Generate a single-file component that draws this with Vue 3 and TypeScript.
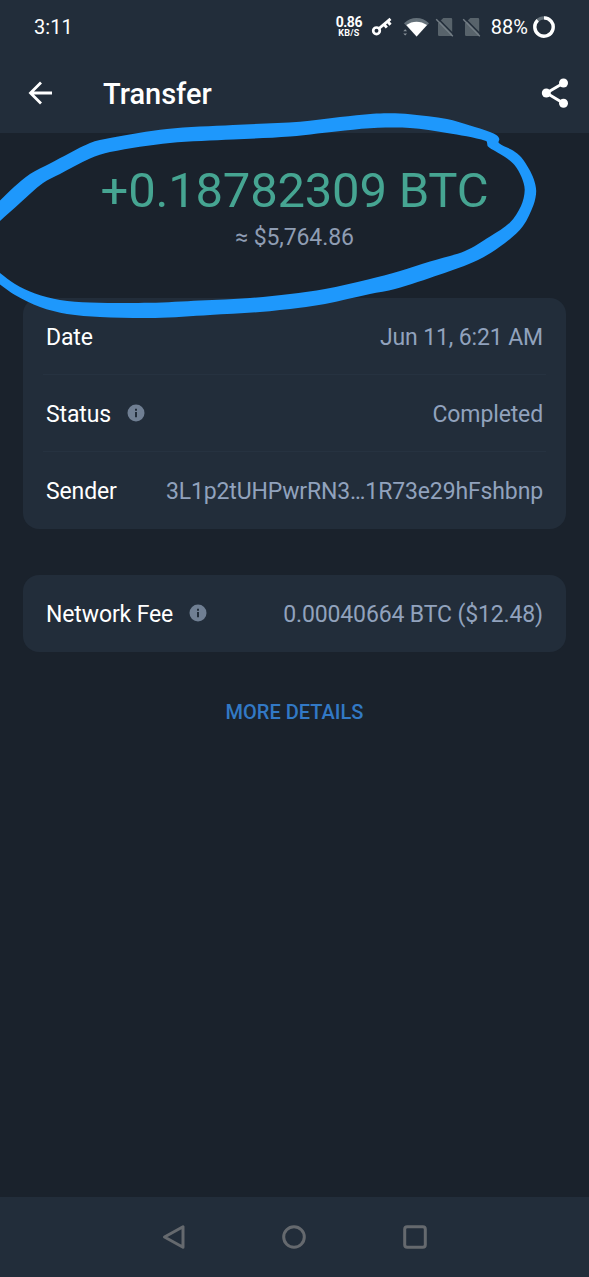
<script setup lang="ts">
interface Row {
  label: string
  value: string
  info?: boolean
}

type Point = [number, number]

const groups: Row[][] = [
  [
    { label: 'Date', value: 'Jun 11, 6:21 AM' },
    { label: 'Status', value: 'Completed', info: true },
    { label: 'Sender', value: '3L1p2tUHPwrRN3…1R73e29hFshbnp' },
  ],
  [{ label: 'Network Fee', value: '0.00040664 BTC ($12.48)', info: true }],
]

// Edges of the hand-drawn marker loop, which runs off the left side.
const outerEdge: Point[] = [
  [-6, 207], [0, 200.5], [14, 187], [30, 174], [50, 163.5], [90, 143], [110, 138], [167, 129], [233, 125],
  [300, 121.8], [340, 117], [373, 113.7], [390, 113.2], [410, 114.2], [447, 119], [470, 125.5], [490, 132],
  [497, 135.5], [499.3, 139], [498.8, 143], [513, 150.5], [521, 157], [529, 169], [533.7, 179], [536.2, 191],
  [533.5, 205], [523, 226], [505, 243], [478, 260], [440, 274.5], [395, 289], [370, 294], [325, 304],
  [300, 307.7], [260, 312], [210, 315], [155, 318], [100, 317], [67, 314], [40, 307], [15, 295], [-6, 280],
]
const innerEdge: Point[] = [
  [-6, 268], [0, 273], [15, 284], [35, 293.5], [60, 300], [90, 302.5], [150, 302.8], [200, 300.5], [250, 298],
  [290, 294], [325, 289], [368, 279.5], [400, 271], [430, 261.5], [465, 251], [490, 236.5], [510, 222.5],
  [521, 206], [524.7, 190], [521.5, 177], [514.5, 165], [505, 157], [495, 151], [488, 146.5], [486, 141],
  [447, 133], [410, 128], [378, 127.8], [345, 130.5], [290, 136.5], [233, 139.5], [170, 143], [110, 152],
  [90, 158.5], [60, 174], [43, 183], [20, 203], [0, 221], [-6, 226],
]

function smooth(points: Point[]): string {
  let d = `${points[0][0]} ${points[0][1]}`
  for (let i = 0; i < points.length - 1; i++) {
    const a = points[Math.max(0, i - 1)]
    const b = points[i]
    const c = points[i + 1]
    const e = points[Math.min(points.length - 1, i + 2)]
    // Handles follow the neighbouring direction, scaled to this segment so short ones never overshoot.
    const length = Math.hypot(c[0] - b[0], c[1] - b[1]) / 3.2
    const start = Math.hypot(c[0] - a[0], c[1] - a[1])
    const end = Math.hypot(e[0] - b[0], e[1] - b[1])
    d += ` C${b[0] + ((c[0] - a[0]) / start) * length} ${b[1] + ((c[1] - a[1]) / start) * length}`
    d += ` ${c[0] - ((e[0] - b[0]) / end) * length} ${c[1] - ((e[1] - b[1]) / end) * length} ${c[0]} ${c[1]}`
  }
  return d
}

const markerPath = `M${smooth(outerEdge)} L${smooth(innerEdge)} Z`
</script>

<template>
  <div class="screen">
    <header class="top">
      <div class="status">
        <span class="clock">3:11</span>
        <div class="indicators">
          <div class="speed"><b>0.86</b><small>KB/S</small></div>
          <svg class="key" width="22" height="20" viewBox="0 0 22 20" fill="none" stroke="#fff">
            <circle cx="5.5" cy="13.8" r="3.3" stroke-width="2.7" />
            <path d="M8 11.5 19.5 1.8M13 7.3l2.8 3.3M16.6 4.3l2.9 3.4" stroke-width="2.9" />
          </svg>
          <svg class="wifi" width="28" height="20" viewBox="0 0 28 20">
            <path d="M2 6.2C9-.9 20-.9 27 6.2L14.6 19.5Z" fill="#65717a" />
            <path d="M4.300 8.100C10.500 3.600 18.500 3.600 25 8.100L14.600 19.500Z" fill="#fff" />
            <path d="M1.300 14.200 3.200 12.200 5.100 14.200ZM1.300 16.500 3.200 18.500 5.100 16.500Z" fill="#89929a" />
          </svg>
          <svg v-for="n in 2" :key="n" class="sim" width="20" height="22" viewBox="0 0 20 22">
            <path d="M8.300 2H16a1.200 1.200 0 0 1 1.200 1.200V18.800A1.200 1.200 0 0 1 16 20H4.200a1.200 1.200 0 0 1-1.200-1.200V7.300Z" fill="#58636b" />
            <path d="M3.200 2.700 19.200 19.100" stroke="#222d3a" stroke-width="1.500" />
            <path d="M1.200 3.300 17.800 20.200" stroke="#747e86" stroke-width="1.400" />
          </svg>
          <span class="percent">88%</span>
          <svg class="battery" width="24" height="24" viewBox="0 0 24 24" fill="none" stroke-width="3.300">
            <circle cx="12" cy="12" r="9.200" stroke="#65717a" />
            <path d="M12 2.800A9.200 9.200 0 1 1 5.700 5.300" stroke="#fff" />
          </svg>
        </div>
      </div>
      <div class="bar">
        <svg class="back" width="26" height="26" viewBox="0 0 26 26" fill="none" stroke="#fff" stroke-width="2.800">
          <path d="M25 13H3.500M14 2.500 3.500 13 14 23.500" />
        </svg>
        <h1>Transfer</h1>
        <svg class="share" width="28" height="30" viewBox="0 0 28 30" fill="#fff">
          <path d="M22.500 5 5.500 15 22.500 25.200" fill="none" stroke="#fff" stroke-width="2.900" />
          <circle cx="22.500" cy="5" r="4.500" /><circle cx="5.300" cy="15" r="4.500" /><circle cx="22.500" cy="25.200" r="4.500" />
        </svg>
      </div>
    </header>

    <main>
      <section class="amount">
        <div class="crypto">+0.18782309 BTC</div>
        <div class="fiat">≈ $5,764.86</div>
      </section>
      <section v-for="(rows, g) in groups" :key="g" class="card">
        <div v-for="row in rows" :key="row.label" class="row">
          <span class="label">{{ row.label }}</span>
          <svg v-if="row.info" class="info" width="18" height="18" viewBox="0 0 18 18">
            <circle cx="9" cy="9" r="8.500" fill="#707f93" />
            <path d="M8 4.700h2v2H8ZM8 8h2v5.300H8Z" fill="#222d3a" />
          </svg>
          <span class="value">{{ row.value }}</span>
        </div>
      </section>
      <button class="more">MORE DETAILS</button>
    </main>

    <nav>
      <svg width="24" height="26" viewBox="0 0 24 26"><path d="M21 2.700V23.300L2.500 13Z" /></svg>
      <svg width="26" height="26" viewBox="0 0 26 26"><circle cx="13" cy="13" r="10.300" /></svg>
      <svg width="26" height="26" viewBox="0 0 26 26"><rect x="2.700" y="2.700" width="20.600" height="20.600" rx="2.500" /></svg>
    </nav>

    <svg class="marker" width="589" height="340" viewBox="0 0 589 340"><path :d="markerPath" /></svg>
  </div>
</template>

<style>
body {
  background: #1a222c;
}
</style>

<style scoped>
.screen {
  position: relative;
  box-sizing: border-box;
  width: 589px;
  height: 1277px;
  display: flex;
  flex-direction: column;
  overflow: hidden;
  background: #1a222c;
  color: #fff;
  font-family: Roboto, sans-serif;
}
svg {
  display: block;
  flex: none;
}
.top {
  height: 133px;
  background: #222d3a;
}
.status {
  height: 54px;
  display: flex;
  align-items: center;
  justify-content: space-between;
  padding: 0 33px 0 34px;
}
.clock {
  font-size: 20px;
  letter-spacing: 0.1px;
}
.indicators {
  display: flex;
  align-items: center;
}
.speed {
  width: 28px;
  display: flex;
  flex-direction: column;
  align-items: center;
  line-height: 1;
}
.speed b {
  font-size: 14px;
  line-height: 12px;
  font-weight: 700;
  letter-spacing: -0.5px;
}
.speed small {
  font-size: 9px;
  line-height: 10px;
  font-weight: 700;
  letter-spacing: 0.2px;
}
.key {
  margin-left: 8px;
}
.wifi {
  margin-left: 9px;
}
.sim {
  margin-left: 5px;
}
.sim + .sim {
  margin-left: 7px;
}
.percent {
  margin-left: 9px;
  font-size: 20px;
}
.battery {
  margin-left: 4px;
}
.indicators .speed {
  margin-left: -1px;
}
.bar {
  height: 77px;
  display: flex;
  align-items: center;
  padding: 0 20px 0 27px;
}
h1 {
  margin: 2px 0 0 50px;
  flex: 1;
  font-size: 29px;
  font-weight: 500;
  line-height: 34px;
}
main {
  flex: 1;
  display: flex;
  flex-direction: column;
  padding: 0 23px;
}
.amount {
  height: 165px;
  box-sizing: border-box;
  padding-top: 29px;
  text-align: center;
}
.crypto {
  color: #46a592;
  font-size: 49px;
  letter-spacing: -0.22px;
  line-height: 58px;
  white-space: nowrap;
}
.fiat {
  margin-top: 4px;
  color: #8f9db3;
  font-size: 23px;
  letter-spacing: -0.1px;
  line-height: 28px;
}
.card {
  border-radius: 16px;
  background: #222d3a;
  margin-bottom: 46px;
}
.row {
  position: relative;
  height: 77px;
  box-sizing: border-box;
  display: flex;
  align-items: center;
  padding: 2px 23px 0;
  font-size: 23px;
  letter-spacing: -0.13px;
}
.row + .row::before {
  content: '';
  position: absolute;
  top: -1px;
  left: 20px;
  right: 20px;
  height: 1px;
  background: #263240;
}
.info {
  margin: -3px 0 0 16px;
}
.value {
  margin-left: auto;
  color: #91a2bd;
}
.more {
  align-self: center;
  border: 0;
  padding: 0;
  background: none;
  color: #3279c5;
  font: 500 20px/28px Roboto, sans-serif;
}
nav {
  height: 80px;
  box-sizing: border-box;
  display: flex;
  align-items: center;
  justify-content: space-between;
  padding: 0 161px 0 162px;
  background: #222d3a;
}
nav svg {
  fill: none;
  stroke: #65696e;
  stroke-width: 3;
  stroke-linejoin: round;
}
.marker {
  position: absolute;
  top: 0;
  left: 0;
  fill: #1e98fc;
  pointer-events: none;
}
</style>
